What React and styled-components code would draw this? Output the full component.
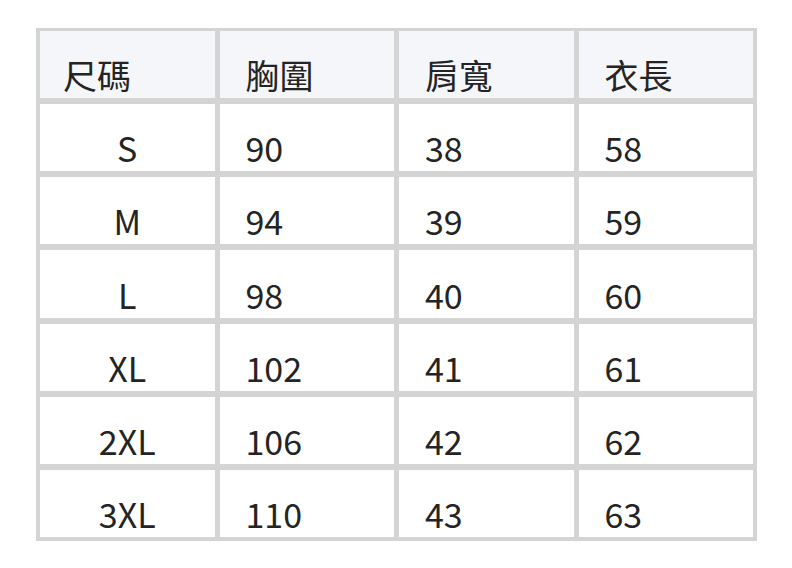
import React from "react";
import styled, { createGlobalStyle } from "styled-components";

const GlobalStyle = createGlobalStyle`
  html, body {
    margin: 0;
    padding: 0;
    background: #ffffff;
  }
  body {
    font-family: "Noto Sans CJK TC", "Noto Sans", sans-serif;
    color: #222222;
  }
`;

const Page = styled.div`
  padding: 28px 0 0 36px;
`;

const SizeTable = styled.div`
  width: 721px;
  height: 513px;
  box-sizing: border-box;
  display: grid;
  grid-template-columns: repeat(4, 1fr);
  grid-template-rows: repeat(7, 1fr);
  column-gap: 5px;
  row-gap: 6px;
  padding: 3px 4px 4px 4px;
  background: #d4d4d4;
`;

const Cell = styled.div`
  display: flex;
  align-items: flex-end;
  justify-content: ${({ center }) => (center ? "center" : "flex-start")};
  padding: 0 0 6px ${({ center, indent }) => (center ? "0" : `${indent || 26}px`)};
  background: ${({ head }) => (head ? "#f5f6fa" : "#ffffff")};
  font-size: 34px;
  line-height: 34px;
  color: #242424;
`;

const headers = ["尺碼", "胸圍", "肩寬", "衣長"];

const rows = [
  ["S", "90", "38", "58"],
  ["M", "94", "39", "59"],
  ["L", "98", "40", "60"],
  ["XL", "102", "41", "61"],
  ["2XL", "106", "42", "62"],
  ["3XL", "110", "43", "63"],
];

const App = () => {
  return (
    <Page>
      <GlobalStyle />
      <SizeTable>
        {headers.map((h, i) => (
          <Cell head indent={i === 0 ? 23 : 26} key={h}>
            {h}
          </Cell>
        ))}
        {rows.map((row) =>
          row.map((value, i) => (
            <Cell center={i === 0} key={row[0] + i}>
              {value}
            </Cell>
          ))
        )}
      </SizeTable>
    </Page>
  );
};

export default App;
